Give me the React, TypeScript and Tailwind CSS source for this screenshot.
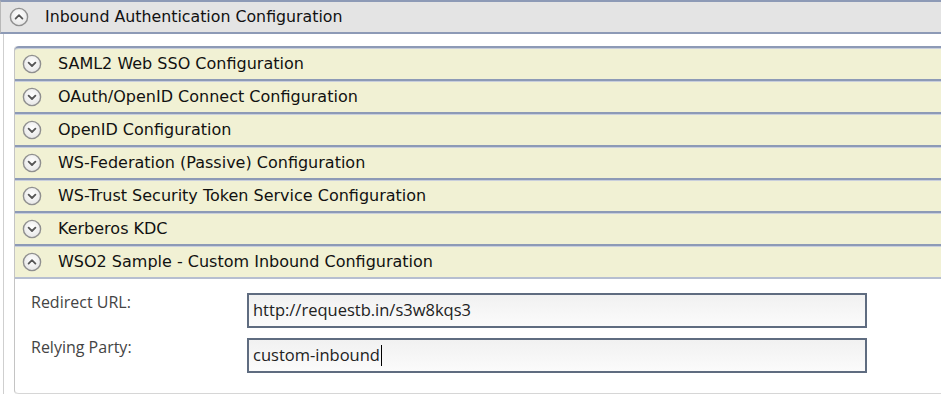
import React from "react";

const font = { fontFamily: '"DejaVu Sans", Verdana, sans-serif' };

const Toggle = ({ open }: { open: boolean }) => (
  <svg width="20" height="20" viewBox="0 0 20 20" className="shrink-0">
    <defs>
      <radialGradient id={open ? "tg-o" : "tg-c"} cx="50%" cy="40%" r="60%">
        <stop offset="0%" stopColor="#ffffff" />
        <stop offset="100%" stopColor="#e6e6e6" />
      </radialGradient>
    </defs>
    <circle cx="10" cy="10" r="8.6" fill={`url(#${open ? "tg-o" : "tg-c"})`} stroke="#8f8f8f" strokeWidth="1.4" />
    <path
      d={open ? "M6.6 11.6 L10 8.2 L13.4 11.6" : "M6.6 8.6 L10 12 L13.4 8.6"}
      fill="none"
      stroke="#555"
      strokeWidth="1.8"
      strokeLinecap="round"
      strokeLinejoin="round"
    />
  </svg>
);

const rows = [
  "SAML2 Web SSO Configuration",
  "OAuth/OpenID Connect Configuration",
  "OpenID Configuration",
  "WS-Federation (Passive) Configuration",
  "WS-Trust Security Token Service Configuration",
  "Kerberos KDC",
];

const Row = ({ title, open, first }: { title: string; open?: boolean; first?: boolean }) => (
  <div
    className={`flex h-[33px] items-center gap-[16px] border-t-2 border-[#8d9ab6] bg-[#f1f1d4] pl-[7px] text-[16px] text-[#111] shadow-[inset_0_1px_0_#c9cfdc] ${
      first ? "rounded-tl-[4px]" : ""
    }`}
  >
    <Toggle open={!!open} />
    <span>{title}</span>
  </div>
);

const Field = ({ label, value, caret }: { label: string; value: string; caret?: boolean }) => (
  <div className="flex items-start">
    <div className="w-[216px] pt-0 text-[16px] leading-[18px] text-[#444]">{label}</div>
    <div className="flex h-[35px] w-[620px] items-center border-2 border-[#5f6c80] bg-gradient-to-b from-[#f1f1f1] to-[#fbfbfb] pl-[4px] text-[16.5px] text-[#222]">
      <span>{value}</span>
      {caret && <span className="ml-[1px] inline-block h-[21px] w-[1.5px] bg-black" />}
    </div>
  </div>
);

export default function App() {
  return (
    <div className="h-[396px] w-[941px] overflow-hidden bg-white" style={font}>
      <div className="flex h-[34px] items-center gap-[16px] border-t-2 border-b-2 border-l border-[#8d9ab6] border-l-[#b8b8b8] bg-[#e4e4e4] pl-[8px] text-[15.8px] text-[#111]">
        <Toggle open />
        <span>Inbound Authentication Configuration</span>
      </div>
      <div className="border-l border-[#cfcfcf] pl-[10px] pt-[12px] ml-[3px]">
        <div className="rounded-l-[4px] border-l border-[#c4c4c4]">
          {rows.map((r, i) => (
            <Row key={r} title={r} first={i === 0} />
          ))}
          <Row title="WSO2 Sample - Custom Inbound Configuration" open />
          <div
            className="flex h-[117px] flex-col gap-[10px] rounded-bl-[4px] border-t-2 border-b border-[#b6bed0] border-b-[#d6d6d6] pl-[16px] pt-[14px]"
            style={{ fontFamily: '"Open Sans", "Noto Sans", sans-serif' }}
          >
            <Field label="Redirect URL:" value="http://requestb.in/s3w8kqs3" />
            <Field label="Relying Party:" value="custom-inbound" caret />
          </div>
        </div>
      </div>
    </div>
  );
}
